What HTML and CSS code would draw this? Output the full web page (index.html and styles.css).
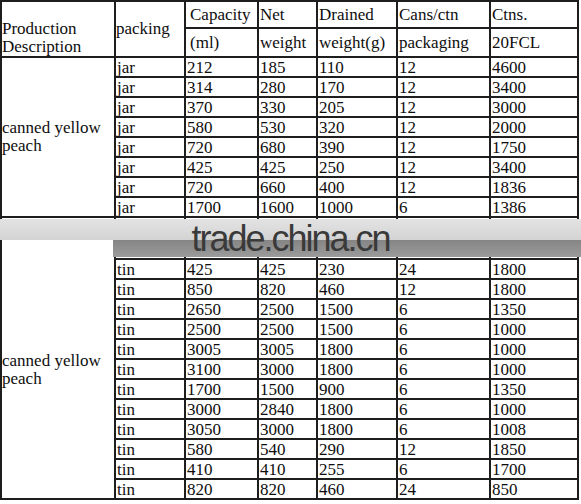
FILE: index.html
```html
<!DOCTYPE html>
<html>
<head>
<meta charset="utf-8">
<link rel="stylesheet" href="styles.css">
</head>
<body>
<div class="sheet">
<table class="spec">
  <colgroup>
    <col class="c1"><col class="c2"><col class="c3"><col class="c4"><col class="c5"><col class="c6"><col class="c7">
  </colgroup>
  <thead>
    <tr class="h1">
      <th rowspan="2" class="desc-head">Production<br>Description</th>
      <th rowspan="2" class="pack-head">packing</th>
      <th class="indent">Capacity</th>
      <th>Net</th>
      <th>Drained</th>
      <th>Cans/ctn</th>
      <th>Ctns.</th>
    </tr>
    <tr class="h2">
      <th class="indent">(ml)</th>
      <th>weight</th>
      <th>weight(g)</th>
      <th>packaging</th>
      <th>20FCL</th>
    </tr>
  </thead>
  <tbody>
    <tr><td rowspan="8" class="group g1">canned yellow<br>peach</td><td>jar</td><td>212</td><td>185</td><td>110</td><td>12</td><td>4600</td></tr>
    <tr><td>jar</td><td>314</td><td>280</td><td>170</td><td>12</td><td>3400</td></tr>
    <tr><td>jar</td><td>370</td><td>330</td><td>205</td><td>12</td><td>3000</td></tr>
    <tr><td>jar</td><td>580</td><td>530</td><td>320</td><td>12</td><td>2000</td></tr>
    <tr><td>jar</td><td>720</td><td>680</td><td>390</td><td>12</td><td>1750</td></tr>
    <tr><td>jar</td><td>425</td><td>425</td><td>250</td><td>12</td><td>3400</td></tr>
    <tr><td>jar</td><td>720</td><td>660</td><td>400</td><td>12</td><td>1836</td></tr>
    <tr><td>jar</td><td>1700</td><td>1600</td><td>1000</td><td>6</td><td>1386</td></tr>
    <tr class="blank"><td rowspan="13" class="group g2">canned yellow<br>peach</td><td class="empty"></td><td class="empty"></td><td class="empty"></td><td class="empty"></td><td class="empty"></td><td class="empty"></td></tr>
    <tr><td>tin</td><td>425</td><td>425</td><td>230</td><td>24</td><td>1800</td></tr>
    <tr><td>tin</td><td>850</td><td>820</td><td>460</td><td>12</td><td>1800</td></tr>
    <tr><td>tin</td><td>2650</td><td>2500</td><td>1500</td><td>6</td><td>1350</td></tr>
    <tr><td>tin</td><td>2500</td><td>2500</td><td>1500</td><td>6</td><td>1000</td></tr>
    <tr><td>tin</td><td>3005</td><td>3005</td><td>1800</td><td>6</td><td>1000</td></tr>
    <tr><td>tin</td><td>3100</td><td>3000</td><td>1800</td><td>6</td><td>1000</td></tr>
    <tr><td>tin</td><td>1700</td><td>1500</td><td>900</td><td>6</td><td>1350</td></tr>
    <tr><td>tin</td><td>3000</td><td>2840</td><td>1800</td><td>6</td><td>1000</td></tr>
    <tr><td>tin</td><td>3050</td><td>3000</td><td>1800</td><td>6</td><td>1008</td></tr>
    <tr><td>tin</td><td>580</td><td>540</td><td>290</td><td>12</td><td>1850</td></tr>
    <tr><td>tin</td><td>410</td><td>410</td><td>255</td><td>6</td><td>1700</td></tr>
    <tr><td>tin</td><td>820</td><td>820</td><td>460</td><td>24</td><td>850</td></tr>
  </tbody>
</table>
<div class="watermark">
  <div class="wm-top"></div>
  <div class="wm-dark"></div>
  <div class="wm-text">trade.china.cn</div>
</div>
</div>
</body>
</html>
```

FILE: styles.css
```css
html, body {
  margin: 0;
  padding: 0;
  background: #ffffff;
}

.sheet {
  position: relative;
  width: 581px;
  height: 504px;
  overflow: hidden;
}

.spec {
  border-collapse: separate;
  border-spacing: 0;
  table-layout: fixed;
  width: 579px;
  border-top: 2px solid #1e1e1e;
  border-left: 2px solid #1e1e1e;
  font-family: "Liberation Serif", "Times New Roman", serif;
  font-size: 17px;
  color: #0e0e0e;
}

.c1 { width: 114px; }
.c2 { width: 70px; }
.c3 { width: 73px; }
.c4 { width: 59px; }
.c5 { width: 80px; }
.c6 { width: 93px; }
.c7 { width: 88px; }

.spec th,
.spec td {
  border-right: 2px solid #1e1e1e;
  border-bottom: 2px solid #1e1e1e;
  padding: 1px 0 0 1px;
  line-height: 17px;
  text-align: left;
  font-weight: normal;
  white-space: nowrap;
  vertical-align: top;
}

.spec .h1 th {
  padding-top: 0;
  line-height: 25px;
}

.spec .h2 th {
  padding-top: 0;
  line-height: 27px;
}

.spec .h1 .desc-head {
  line-height: 18px;
  padding: 18px 0 0 0;
  vertical-align: top;
}

.spec .h1 .pack-head {
  line-height: 18px;
  padding: 0;
  vertical-align: middle;
}

.spec .indent {
  padding-left: 4px;
}

.spec td.group {
  vertical-align: middle;
  padding: 0;
  line-height: 18px;
  white-space: normal;
}

.spec td.g2 {
  padding-top: 24px;
}

.spec td.empty {
  height: 40px;
  padding: 0;
}

.watermark {
  position: absolute;
  z-index: 10;
  left: 0;
  top: 219px;
  width: 581px;
  height: 40px;
  pointer-events: none;
}

.wm-top {
  height: 21px;
  background: linear-gradient(#e3e3e3, #d3d3d3);
}

.wm-dark {
  margin-left: 113px;
  height: 17px;
  background: linear-gradient(#858585, #9b9b9b);
}

.wm-text {
  position: absolute;
  left: 0;
  top: 2px;
  width: 581px;
  text-align: center;
  font-family: "Liberation Sans", Arial, sans-serif;
  font-size: 36px;
  line-height: 36px;
  letter-spacing: -2px;
  color: #3a3a3a;
}
```
